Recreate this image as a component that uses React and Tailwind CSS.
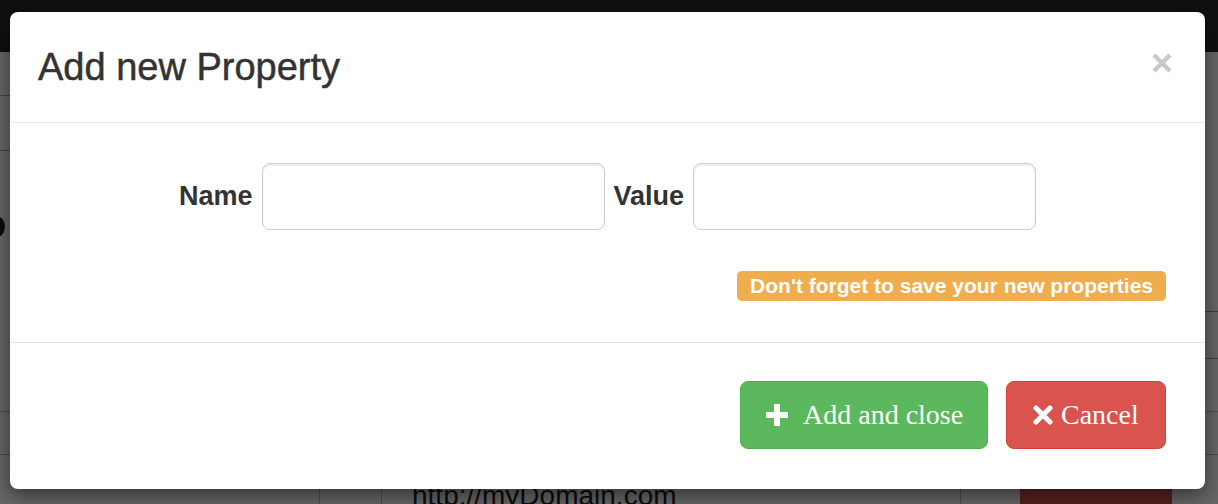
import React from 'react';

const sans = { fontFamily: '"Liberation Sans", Arial, sans-serif' };

const PlusIcon = () => (
  <svg width="22" height="22" viewBox="0 0 22 22" className="shrink-0">
    <path d="M8 0h6v8h8v6h-8v8H8v-8H0V8h8z" fill="#fff" />
  </svg>
);

const XIcon = () => (
  <svg width="20" height="20" viewBox="0 0 20 20" className="shrink-0">
    <path d="M3 3L17 17M17 3L3 17" stroke="#fff" strokeWidth="5" strokeLinecap="round" />
  </svg>
);

const App = () => {
  return (
    <div className="relative h-[504px] w-full overflow-hidden bg-white font-['Liberation_Sans',Arial,sans-serif]">
      {/* page behind the modal */}
      <div className="h-[52px] bg-[#2a2a2a]" />
      <div className="flex flex-col">
        <div className="mt-[43px] flex justify-between">
          <div className="ml-[-8px] h-[56px] w-[300px] rounded border border-[#aaa]" />
        </div>
        <div className="mt-[52px] ml-[-28px] w-[60px] overflow-hidden whitespace-nowrap text-[52px] font-bold leading-[60px] text-[#222]">Pro</div>
        <div className="mt-[48px] flex justify-end">
          <div className="mr-[-40px] h-[48px] w-[300px] rounded border border-[#999]" />
        </div>
        <div className="mt-[52px] h-[43px] border-t border-[#bbb]" />
        <div className="grid h-[56px] grid-cols-[319px_62px_579px_1fr] border-t border-[#bbb]">
          <div />
          <div className="border-l border-[#bbb]" />
          <div className="flex items-end border-l border-[#bbb] pb-[8px] pl-[30px] text-[28px] text-[#222]">
            http://myDomain.com
          </div>
          <div className="border-l border-[#bbb] pt-[10px] pl-[59px]">
            <div className="h-[60px] w-[152px] rounded bg-[#d9534f]" />
          </div>
        </div>
      </div>

      {/* backdrop */}
      <div className="absolute inset-0 bg-black/60" />

      {/* modal */}
      <div
        className="absolute left-[10px] top-[12px] w-[1195px] rounded-[8px] bg-white shadow-[0_6px_20px_rgba(0,0,0,0.5)]"
        style={sans}
      >
        <div className="flex h-[111px] items-start justify-between border-b border-[#e5e5e5] pl-[28px] pr-[33px] pt-[34px]">
          <h3 className="text-[38px] font-normal leading-[normal] text-[#333] [-webkit-text-stroke:0.5px_#333]">Add new Property</h3>
          <button className="mt-[7px]" aria-label="Close">
            <svg width="20" height="20" viewBox="0 0 20 20">
              <path d="M2 2L18 18M18 2L2 18" stroke="#c8c8c8" strokeWidth="4.5" />
            </svg>
          </button>
        </div>

        <div className="flex flex-col border-b border-[#e5e5e5] px-[39px] pb-[41px] pt-[40px]">
          <div className="flex items-center justify-center gap-[9px]">
            <label className="text-[27px] font-bold text-[#333]">Name</label>
            <input
              type="text"
              className="h-[67px] w-[343px] rounded-[8px] border border-[#ccc] px-[20px] text-[26px] shadow-[inset_0_2px_2px_rgba(0,0,0,0.075)] outline-none"
            />
            <label className="text-[27px] font-bold text-[#333]">Value</label>
            <input
              type="text"
              className="h-[67px] w-[343px] rounded-[8px] border border-[#ccc] px-[20px] text-[26px] shadow-[inset_0_2px_2px_rgba(0,0,0,0.075)] outline-none"
            />
          </div>
          <div className="mt-[41px] flex justify-end">
            <span className="flex h-[30px] items-center rounded-[5px] bg-[#f0ad4e] px-[13px] text-[21px] font-bold text-white">
              Don't forget to save your new properties
            </span>
          </div>
        </div>

        <div className="flex justify-end gap-[18px] px-[39px] pb-[40px] pt-[38px] font-['Liberation_Serif','Times_New_Roman',serif]">
          <button className="flex h-[68px] w-[248px] items-center rounded-[8px] border border-[#4cae4c] bg-[#5cb85c] pl-[25px] text-[28px] text-white">
            <PlusIcon />
            <span className="ml-[15px]">Add and close</span>
          </button>
          <button className="flex h-[68px] w-[160px] items-center rounded-[8px] border border-[#d43f3a] bg-[#d9534f] pl-[26px] text-[28px] text-white">
            <XIcon />
            <span className="ml-[8px]">Cancel</span>
          </button>
        </div>
      </div>
    </div>
  );
};

export default App;
